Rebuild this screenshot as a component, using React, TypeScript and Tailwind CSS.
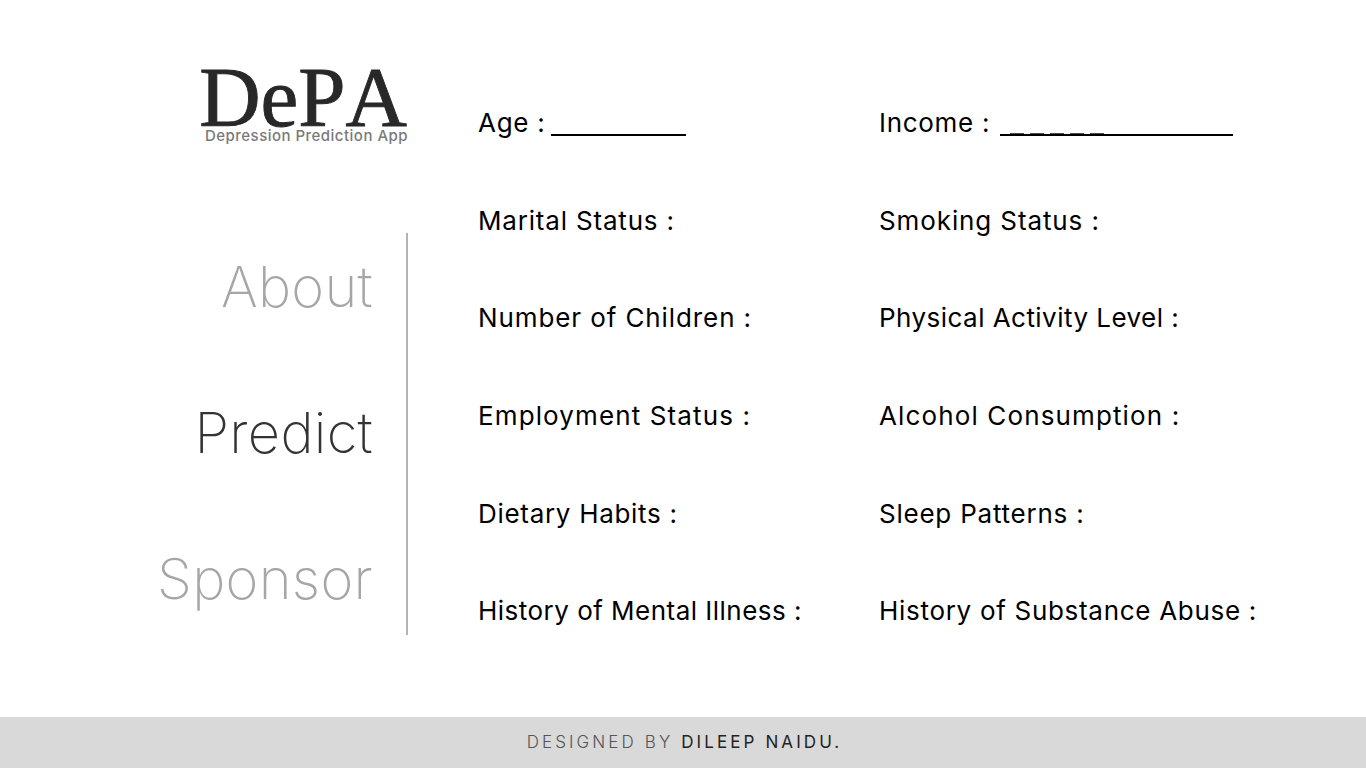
const leftFields = [
  { label: "Marital Status :", tracking: "tracking-[0.82px]" },
  { label: "Number of Children :", tracking: "tracking-[0.9px]" },
  { label: "Employment Status :", tracking: "tracking-[1.12px]" },
  { label: "Dietary Habits :", tracking: "tracking-[0.7px]" },
  { label: "History of Mental Illness :", tracking: "tracking-[0.48px]" },
];

const rightFields = [
  { label: "Smoking Status :", tracking: "tracking-[0.89px]" },
  { label: "Physical Activity Level :", tracking: "tracking-[0.46px]" },
  { label: "Alcohol Consumption :", tracking: "tracking-[1.13px]" },
  { label: "Sleep Patterns :", tracking: "tracking-[0.77px]" },
  { label: "History of Substance Abuse :", tracking: "tracking-[0.7px]" },
];

const Field = ({ label, tracking }: { label: string; tracking: string }) => (
  <p className={`h-[97.7px] text-[26px] leading-[40px] text-black whitespace-nowrap ${tracking}`}>{label}</p>
);

const App = () => {
  return (
    <div className="flex flex-col h-[768px] bg-white font-['Inter','Liberation_Sans',sans-serif] overflow-hidden">
      <main className="flex flex-1">
        <aside className="w-[408px] shrink-0 flex flex-col items-end">
          <div className="mt-[67px] h-[166px] flex flex-col items-end">
            <h1 className="mr-px font-['Liberation_Serif',serif] text-[85px] leading-[60px] [font-kerning:none] [-webkit-text-stroke:0.9px_#282828] text-[#282828]">
              DePA
            </h1>
            <p className="mt-px text-[15px] leading-[16px] tracking-[0.48px] font-medium text-[#7a7a7a]">Depression Prediction App</p>
          </div>
          <nav className="w-full h-[402px] border-r-2 border-[#b3b3b3] pr-[33px] flex flex-col items-end pt-[18px] gap-[74px] text-[56px] leading-[72px] tracking-[0.3px] font-extralight">
            <a className="text-[#a6a6a6]">About</a>
            <a className="text-[#333333]">Predict</a>
            <a className="text-[#a6a6a6]">Sponsor</a>
          </nav>
        </aside>
        <section className="pl-[70px] pt-[103px] flex">
          <div className="w-[401px]">
            <p className="h-[97.7px] text-[26px] leading-[40px] tracking-[0.7px] text-black flex items-start">
              Age :
              <span className="ml-[6px] mt-[31px] w-[135px] border-b-2 border-black" />
            </p>
            {leftFields.map((f) => (
              <Field key={f.label} label={f.label} tracking={f.tracking} />
            ))}
          </div>
          <div>
            <p className="h-[97.7px] text-[26px] leading-[40px] tracking-[0.7px] text-black flex items-start">
              Income :
              <span className="ml-[10px] mt-[30px] w-[233px] flex flex-col">
                <span className="flex h-px gap-[6px] pl-[10px]">
                  <span className="w-[14px] bg-black/70" />
                  <span className="w-[14px] bg-black/70" />
                  <span className="w-[14px] bg-black/70" />
                  <span className="w-[14px] bg-black/70" />
                  <span className="w-[14px] bg-black/70" />
                </span>
                <span className="border-b-2 border-black" />
              </span>
            </p>
            {rightFields.map((f) => (
              <Field key={f.label} label={f.label} tracking={f.tracking} />
            ))}
          </div>
        </section>
      </main>
      <footer className="h-[51px] pl-[3px] bg-[#d9d9d9] flex items-center justify-center text-[17px] tracking-[3.1px] font-light text-[#555555]">
        DESIGNED BY&nbsp;<span className="text-[#222222] font-normal">DILEEP NAIDU.</span>
      </footer>
    </div>
  );
};

export default App;
